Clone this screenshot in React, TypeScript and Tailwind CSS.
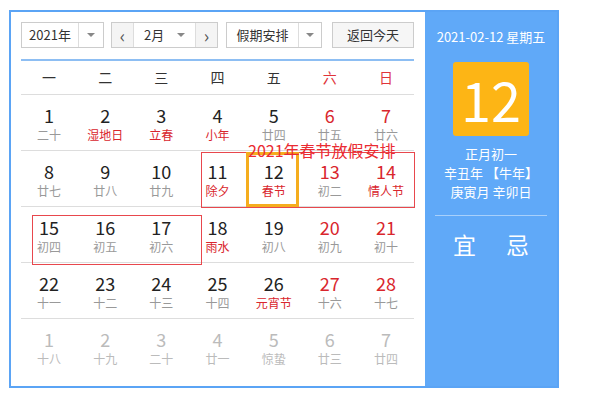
import React from "react";

type Day = { n: number; l: string; red?: boolean; lred?: boolean; dim?: boolean };

const rows: Day[][] = [
  [
    { n: 1, l: "二十" },
    { n: 2, l: "湿地日", lred: true },
    { n: 3, l: "立春", lred: true },
    { n: 4, l: "小年", lred: true },
    { n: 5, l: "廿四" },
    { n: 6, l: "廿五", red: true },
    { n: 7, l: "廿六", red: true },
  ],
  [
    { n: 8, l: "廿七" },
    { n: 9, l: "廿八" },
    { n: 10, l: "廿九" },
    { n: 11, l: "除夕", lred: true },
    { n: 12, l: "春节", lred: true },
    { n: 13, l: "初二", red: true },
    { n: 14, l: "情人节", red: true, lred: true },
  ],
  [
    { n: 15, l: "初四" },
    { n: 16, l: "初五" },
    { n: 17, l: "初六" },
    { n: 18, l: "雨水", lred: true },
    { n: 19, l: "初八" },
    { n: 20, l: "初九", red: true },
    { n: 21, l: "初十", red: true },
  ],
  [
    { n: 22, l: "十一" },
    { n: 23, l: "十二" },
    { n: 24, l: "十三" },
    { n: 25, l: "十四" },
    { n: 26, l: "元宵节", lred: true },
    { n: 27, l: "十六", red: true },
    { n: 28, l: "十七", red: true },
  ],
  [
    { n: 1, l: "十八", dim: true },
    { n: 2, l: "十九", dim: true },
    { n: 3, l: "二十", dim: true },
    { n: 4, l: "廿一", dim: true },
    { n: 5, l: "惊蛰", dim: true },
    { n: 6, l: "廿三", dim: true },
    { n: 7, l: "廿四", dim: true },
  ],
];

const weekdays = ["一", "二", "三", "四", "五", "六", "日"];

function Caret() {
  return <span className="h-0 w-0 border-x-[4px] border-t-[4px] border-x-transparent border-t-[#888]" />;
}

export default function App() {
  return (
    <div
      className="h-[400px] w-[600px] bg-white pl-[9px] pt-[10px]"
      style={{ fontFamily: '"Noto Sans CJK SC", "Liberation Sans", sans-serif' }}
    >
      <div className="flex h-[378px] w-[550px] border-2 border-[#5ba4f5]">
        {/* 左侧日历 */}
        <div className="relative flex-1 bg-white pl-[10px] pt-[10px]">
          <div className="flex h-[26px] items-stretch text-[13px] text-[#333]">
            <div className="flex w-[83px] border border-[#ccc]">
              <div className="flex w-[57px] items-center justify-center border-r border-[#ddd]">2021年</div>
              <div className="flex flex-1 items-center justify-center"><Caret /></div>
            </div>
            <div className="ml-[7px] flex w-[107px] border border-[#ccc]">
              <div className="flex w-[22px] items-center justify-center border-r border-[#ddd] bg-[#f4f4f4] text-[18px] leading-none text-[#555]">‹</div>
              <div className="flex flex-1 items-center justify-between pl-[10px] pr-[10px]">
                <span>2月</span>
                <Caret />
              </div>
              <div className="flex w-[22px] items-center justify-center border-l border-[#ddd] bg-[#f4f4f4] text-[18px] leading-none text-[#555]">›</div>
            </div>
            <div className="ml-[8px] flex w-[96px] border border-[#ccc]">
              <div className="flex w-[72px] items-center justify-center border-r border-[#ddd]">假期安排</div>
              <div className="flex flex-1 items-center justify-center"><Caret /></div>
            </div>
            <div className="ml-[10px] flex w-[82px] items-center justify-center border border-[#ccc] bg-[#f6f6f6]">返回今天</div>
          </div>

          <div className="mt-[11px] w-[393px] border-t-2 border-[#8dbef3]">
            <div className="grid h-[34px] grid-cols-7 border-b border-[#ddd] text-[14px]">
              {weekdays.map((w, i) => (
                <div key={w} className={`flex items-center justify-center ${i >= 5 ? "text-[#e0343a]" : "text-[#333]"}`}>
                  {w}
                </div>
              ))}
            </div>
            <div className="relative">
              {rows.map((row, ri) => (
                <div key={ri} className={`grid h-[56px] grid-cols-7 ${ri < 4 ? "border-b border-[#ddd]" : ""}`}>
                  {row.map((d, ci) => (
                    <div key={ci} className="flex flex-col items-center pt-[8px]">
                      <span
                        className={`text-[18px] leading-[24px] ${
                          d.dim ? "text-[#bbb]" : d.red ? "text-[#d9262d]" : "text-[#222]"
                        }`}
                      >
                        {d.n}
                      </span>
                      <span
                        className={`text-[12px] leading-[16px] ${
                          d.dim ? "text-[#bbb]" : d.lred ? "text-[#d9262d]" : "text-[#999]"
                        }`}
                      >
                        {d.l}
                      </span>
                    </div>
                  ))}
                </div>
              ))}

              {/* 标注 */}
              <div className="absolute left-[180px] top-[57px] h-[56px] w-[214px] border border-[#e8474d]" />
              <div className="absolute left-[225px] top-[57px] h-[55px] w-[53px] border-[3px] border-[#f5ad1e]" />
              <div className="absolute left-[11px] top-[120px] h-[50px] w-[170px] border border-[#e8474d]" />
              <div className="absolute left-[227px] top-[46px] text-[16px] leading-[18px] text-[#ea2b32]">2021年春节放假安排</div>
            </div>
          </div>
        </div>

        {/* 右侧详情 */}
        <div className="flex w-[132px] flex-col items-center bg-[#60a9f8] text-white">
          <div className="mt-[16px] text-[13px] leading-[18px]">2021-02-12 星期五</div>
          <div className="mt-[16px] flex h-[74px] w-[76px] items-center justify-center rounded-[3px] bg-[#fdb515] text-[54px] font-normal leading-none">
            12
          </div>
          <div className="mt-[8px] text-[13px] leading-[19px]">正月初一</div>
          <div className="text-[13px] leading-[19px]">辛丑年 【牛年】</div>
          <div className="text-[13px] leading-[19px]">庚寅月 辛卯日</div>
          <div className="mt-[14px] h-px w-[112px] bg-[#a8d0fb]" />
          <div className="mt-[14px] flex gap-[30px] text-[23px] leading-[28px]">
            <span>宜</span>
            <span>忌</span>
          </div>
        </div>
      </div>
    </div>
  );
}
